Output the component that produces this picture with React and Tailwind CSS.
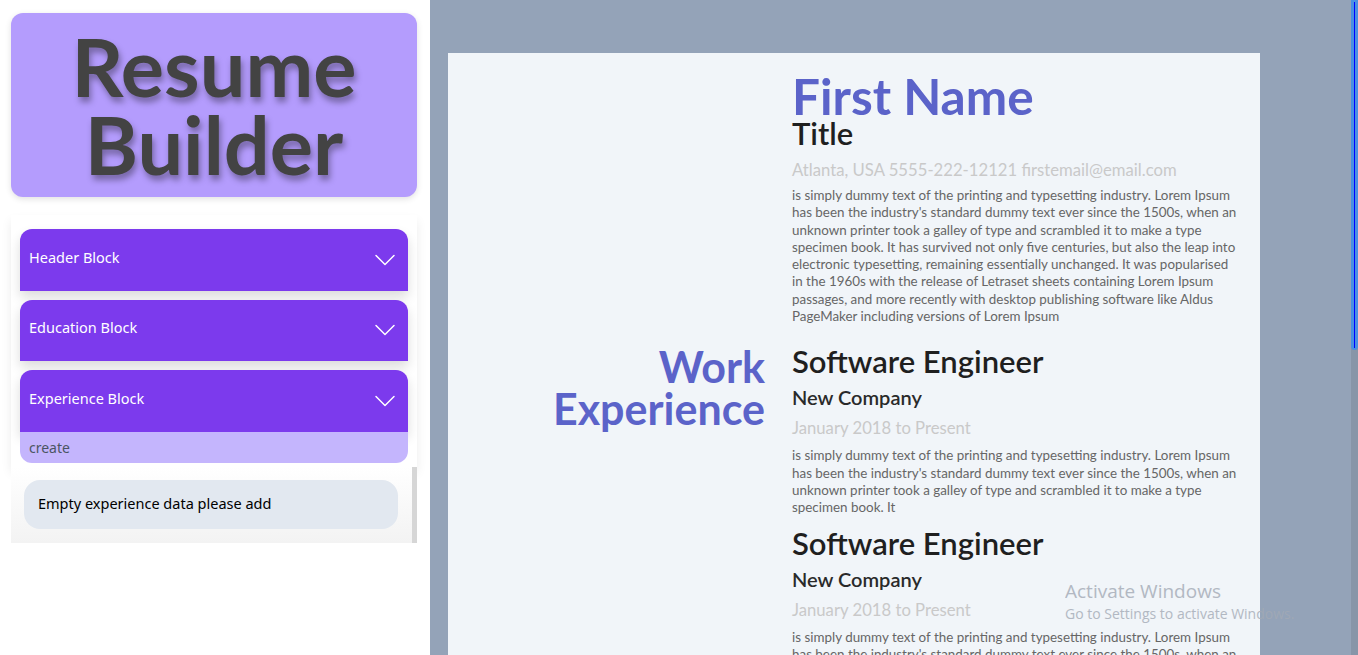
import { ChevronDown } from "lucide-react";

const LOREM_LONG =
  "is simply dummy text of the printing and typesetting industry. Lorem Ipsum has been the industry's standard dummy text ever since the 1500s, when an unknown printer took a galley of type and scrambled it to make a type specimen book. It has survived not only five centuries, but also the leap into electronic typesetting, remaining essentially unchanged. It was popularised in the 1960s with the release of Letraset sheets containing Lorem Ipsum passages, and more recently with desktop publishing software like Aldus PageMaker including versions of Lorem Ipsum";

const LOREM_SHORT =
  "is simply dummy text of the printing and typesetting industry. Lorem Ipsum has been the industry's standard dummy text ever since the 1500s, when an unknown printer took a galley of type and scrambled it to make a type specimen book. It";

const BLOCKS = ["Header Block", "Education Block", "Experience Block"];

const JOBS = [
  { role: "Software Engineer", company: "New Company", dates: "January 2018 to Present", text: LOREM_SHORT },
  { role: "Software Engineer", company: "New Company", dates: "January 2018 to Present", text: LOREM_SHORT },
];

function AccordionHeader({ label }) {
  return (
    <div className="flex h-[61.5px] items-center justify-between rounded-t-xl bg-[#7c3aed] pl-[9px] pr-[5px] text-white shadow-[0_6px_12px_rgba(0,0,0,0.14)]">
      <span className="-mt-[4px] text-[14.5px]">{label}</span>
      <ChevronDown size={36} strokeWidth={1} />
    </div>
  );
}

function Sidebar() {
  return (
    <aside className="flex w-[430px] shrink-0 flex-col bg-white pt-[13px] font-['Noto_Sans',sans-serif]">
      <div className="ml-[11px] mr-[13px] flex h-[184px] flex-col items-center justify-center rounded-xl bg-[#b49cfd] shadow-[0_2px_6px_rgba(0,0,0,0.12)]">
        <h1 className="text-center font-['Lato',sans-serif] text-[81px] font-bold leading-[78px] text-[#434343] [text-shadow:2px_5px_6px_rgba(0,0,0,0.35)]">
          Resume
          <br />
          Builder
        </h1>
      </div>

      <div className="ml-[11px] mr-[13px] mt-[18px] flex flex-col bg-white px-[9px] pb-[4px] shadow-[0_6px_10px_rgba(0,0,0,0.08)]">
        <div className="flex flex-col gap-[9px] pt-[14px]">
          {BLOCKS.map((b, i) => (
            <div key={b}>
              <AccordionHeader label={b} />
              {i === BLOCKS.length - 1 && (
                <div className="flex h-[31px] items-center rounded-b-xl bg-[#c4b5fd] pl-[9px] text-[14px] text-[#4b5563]">
                  create
                </div>
              )}
            </div>
          ))}
        </div>
      </div>

      <div className="ml-[11px] mr-[13px] flex h-[76px] bg-gradient-to-b from-white to-[#f3f3f3]">
        <div className="flex flex-1 flex-col pl-[13px] pr-[14px] pt-[13px]">
          <div className="flex h-[49px] items-center rounded-2xl bg-[#e2e8f0] pl-[14px] text-[14.5px] text-black">
            Empty experience data please add
          </div>
        </div>
        <div className="w-[5px] bg-[#d6d6d6]" />
      </div>
    </aside>
  );
}

function Resume() {
  return (
    <div className="ml-[18px] mt-[53px] w-[812px] bg-[#f1f5f9] pb-10 font-['Lato',sans-serif]">
      <div className="grid grid-cols-[317px_448px] gap-x-[27px]">
        <div />
        <div className="pt-[19px]">
          <h2 className="text-[49.5px] font-bold leading-[48px] text-[#5b63c9]">First Name</h2>
          <h3 className="-mt-[2px] text-[31px] font-semibold leading-[31px] text-[#1f1f1f]">Title</h3>
          <p className="mt-[9px] text-[16.7px] leading-[24px] text-[#c9c9c9]">
            Atlanta, USA 5555-222-12121 firstemail@email.com
          </p>
          <p className="mt-[5px] text-[13.4px] leading-[17.3px] text-[#666666]">{LOREM_LONG}</p>
        </div>

        <div className="pt-[21px] text-right">
          <h2 className="text-[43px] font-bold leading-[42px] text-[#5b63c9]">
            Work
            <br />
            Experience
          </h2>
        </div>
        <div className="flex flex-col gap-[8px] pt-[18px]">
          {JOBS.map((j, i) => (
            <div key={i}>
              <h3 className="text-[31px] font-semibold leading-[36px] text-[#1f1f1f]">{j.role}</h3>
              <h4 className="mt-[4px] text-[20px] font-semibold leading-[28px] text-[#2a2a2a]">{j.company}</h4>
              <p className="mt-[5px] text-[16.7px] leading-[24px] text-[#c9c9c9]">{j.dates}</p>
              <p className="mt-[7px] text-[13.4px] leading-[17.3px] text-[#666666]">{j.text}</p>
            </div>
          ))}
        </div>
      </div>
    </div>
  );
}

export default function App() {
  return (
    <div className="relative flex h-[655px] w-[1358px] overflow-hidden">
      <Sidebar />
      <main className="flex flex-1 overflow-hidden bg-[#94a3b8]">
        <div className="flex-1">
          <Resume />
        </div>
        <div className="flex w-[7px] flex-col bg-[#8795a8]">
          <div className="flex h-[350px] justify-center rounded-b-sm bg-[#4a90e2]">
            <div className="mb-[2px] mt-[2px] w-[1px] bg-[#0000ff]" />
          </div>
        </div>
      </main>

      <div className="pointer-events-none absolute left-[1065px] top-[579px] font-['Open_Sans',sans-serif] text-[#a3aab5] opacity-80">
        <p className="text-[19px] leading-[24px]">Activate Windows</p>
        <p className="text-[14px] leading-[22px]">Go to Settings to activate Windows.</p>
      </div>
    </div>
  );
}
